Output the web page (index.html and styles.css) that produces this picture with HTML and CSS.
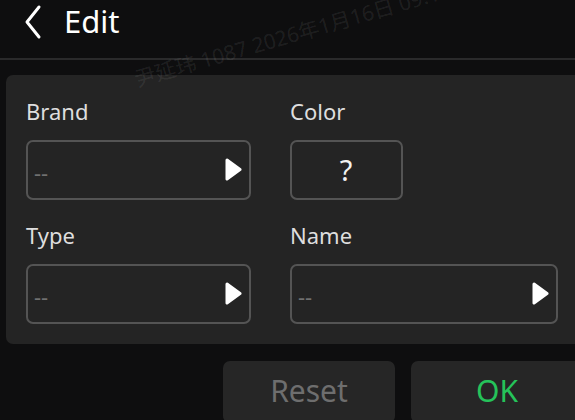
FILE: index.html
```html
<!DOCTYPE html>
<html>
<head>
<meta charset="utf-8">
<link rel="stylesheet" href="styles.css">
</head>
<body>
<div class="screen">
  <header class="topbar">
    <svg class="back" width="18" height="36" viewBox="0 0 18 36"><polyline points="15,3 3,18 15,33" fill="none" stroke="#fff" stroke-width="3" stroke-linecap="round" stroke-linejoin="round"/></svg>
    <span class="title">Edit</span>
  </header>
  <section class="panel">
    <div class="grid">
      <div class="field">
        <div class="label">Brand</div>
        <div class="select wide"><span class="ph">--</span><svg class="tri" width="17" height="23" viewBox="0 0 17 23"><polygon points="2,2 15,11.5 2,21" fill="#fff" stroke="#fff" stroke-width="3" stroke-linejoin="round"/></svg></div>
      </div>
      <div class="field">
        <div class="label">Color</div>
        <div class="select color"><span class="q">?</span></div>
      </div>
      <div class="field">
        <div class="label">Type</div>
        <div class="select wide"><span class="ph">--</span><svg class="tri" width="17" height="23" viewBox="0 0 17 23"><polygon points="2,2 15,11.5 2,21" fill="#fff" stroke="#fff" stroke-width="3" stroke-linejoin="round"/></svg></div>
      </div>
      <div class="field">
        <div class="label">Name</div>
        <div class="select wide"><span class="ph">--</span><svg class="tri" width="17" height="23" viewBox="0 0 17 23"><polygon points="2,2 15,11.5 2,21" fill="#fff" stroke="#fff" stroke-width="3" stroke-linejoin="round"/></svg></div>
      </div>
    </div>
  </section>
  <div class="actions">
    <button class="btn reset">Reset</button>
    <button class="btn ok">OK</button>
  </div>
  <div class="watermark">尹延玮 1087 2026年1月16日 09:14</div>
</div>
</body>
</html>
```
FILE: styles.css
```css
html, body {
  margin: 0;
  padding: 0;
  background: #0e0e0f;
  overflow: hidden;
}
.screen {
  position: relative;
  width: 575px;
  height: 420px;
  overflow: hidden;
  font-family: "Noto Sans", "Noto Sans CJK SC", sans-serif;
  color: #fff;
}
.topbar {
  display: flex;
  align-items: center;
  height: 43px;
  padding: 0 0 15px 24px;
  border-bottom: 2px solid #2a2a2b;
}
.back {
  display: block;
}
.title {
  font-size: 31px;
  line-height: 43px;
  margin-left: 22px;
  color: #fff;
}
.panel {
  margin: 15px -40px 0 6px;
  background: #242424;
  border-radius: 7px;
  padding: 21px 0 20px 20px;
}
.grid {
  display: grid;
  grid-template-columns: 225px 268px;
  column-gap: 39px;
  row-gap: 20px;
}
.label {
  font-size: 22px;
  line-height: 30px;
  color: #dedede;
  margin-bottom: 14px;
}
.select {
  box-sizing: border-box;
  height: 60px;
  border: 2px solid #545454;
  border-radius: 7px;
  display: flex;
  align-items: center;
  justify-content: space-between;
  padding: 0 7px 0 6px;
}
.select.color {
  width: 113px;
  justify-content: center;
}
.ph {
  font-size: 22px;
  color: #707070;
  margin-top: 4px;
}
.q {
  font-size: 29px;
  line-height: 36px;
  color: #f2f2f2;
}
.tri {
  display: block;
  margin-top: -2px;
}
.actions {
  display: flex;
  gap: 16px;
  margin: 17px 0 0 223px;
}
.btn {
  flex: none;
  width: 172px;
  height: 62px;
  border: none;
  border-radius: 7px;
  background: #262626;
  font-family: "Noto Sans", sans-serif;
  font-size: 30px;
  line-height: 60px;
  padding: 0 0 2px 0;
}
.reset {
  color: #6e6e6e;
}
.ok {
  color: #25c35a;
}
.watermark {
  position: absolute;
  left: 138px;
  top: 68px;
  font-size: 21px;
  line-height: 22px;
  white-space: nowrap;
  color: rgba(255, 255, 255, 0.085);
  transform: rotate(-16deg);
  transform-origin: 0 100%;
  pointer-events: none;
}
```
